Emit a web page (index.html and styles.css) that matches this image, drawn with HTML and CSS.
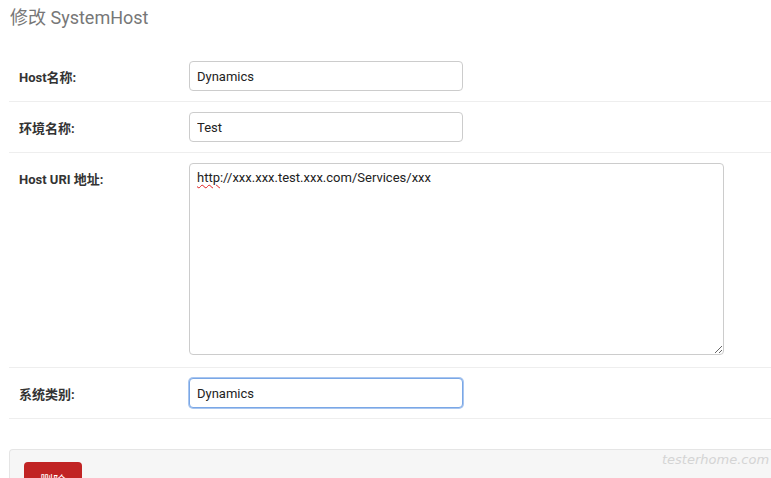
FILE: index.html
```html
<!DOCTYPE html>
<html>
<head>
  <title>修改 SystemHost</title>
  <link rel="stylesheet" href="styles.css">
</head>
<body>

  <h2 class="page-title">修改 SystemHost</h2>

  <div class="form-list">
    <div class="form-row">
      <label class="form-label">Host名称:</label>
      <input class="form-input" type="text" value="Dynamics">
    </div>
    <div class="form-row">
      <label class="form-label">环境名称:</label>
      <input class="form-input" type="text" value="Test">
    </div>
    <div class="form-row top">
      <label class="form-label">Host URI 地址:</label>
      <div class="form-area"><span class="typo">http</span>://xxx.xxx.test.xxx.com/Services/xxx</div>
    </div>
    <div class="form-row">
      <label class="form-label">系统类别:</label>
      <input class="form-input focused" type="text" value="Dynamics">
    </div>
  </div>

  <div class="action-panel">
    <button class="btn-danger">删除</button>
  </div>

  <div class="watermark">testerhome.com</div>

</body>
</html>
```

FILE: styles.css
```css
body {
  font-family: Roboto, "Noto Sans CJK SC", sans-serif;
  font-size: 13px;
  color: #333;
  background-color: #fff;
  margin: 0;
  padding: 0 0 0 9px;
  overflow: hidden;
}

.page-title {
  font-size: 18px;
  font-weight: 400;
  color: #777;
  margin: 0;
  padding: 6px 0 0 1px;
  height: 45px;
  line-height: 24px;
}

.form-list {
  border-bottom: 1px solid #eee;
}

.form-row {
  display: flex;
  align-items: center;
  padding: 10px 0 10px 10px;
}

.form-row + .form-row {
  border-top: 1px solid #eee;
}

.form-row.top {
  align-items: flex-start;
  padding-bottom: 12px;
}

.form-row.top .form-label {
  padding-top: 6px;
}

.form-label {
  width: 170px;
  font-weight: bold;
  flex-shrink: 0;
}

.form-input,
.form-area {
  font-family: Roboto, "Noto Sans CJK SC", sans-serif;
  font-size: 13px;
  color: #222;
  border: 1px solid #ccc;
  border-radius: 4px;
  padding: 6px 7px;
  box-sizing: border-box;
  outline: none;
  margin: 0;
}

.form-input {
  width: 274px;
  height: 30px;
}

.form-input.focused {
  border-color: #7aa7e6;
  box-shadow: 0 0 0 1px #a9c6f0;
}

.form-area {
  width: 535px;
  height: 192px;
  resize: both;
  overflow: auto;
  line-height: 16px;
}

.typo {
  text-decoration: underline wavy #e02020;
  text-decoration-thickness: 1px;
  text-underline-offset: 2px;
}

.action-panel {
  margin-top: 30px;
  background-color: #f6f6f6;
  border: 1px solid #e5e5e5;
  border-right: none;
  border-radius: 4px 0 0 4px;
  padding: 12px 14px;
}

.btn-danger {
  font-family: Roboto, "Noto Sans CJK SC", sans-serif;
  font-size: 13px;
  color: #fff;
  background-color: #c12424;
  border: none;
  border-radius: 4px;
  padding: 8px 16px;
  cursor: pointer;
}

.watermark {
  position: absolute;
  left: 662px;
  top: 452px;
  font-family: "DejaVu Sans", sans-serif;
  font-style: italic;
  font-size: 13px;
  color: #d4d4d4;
}
```
